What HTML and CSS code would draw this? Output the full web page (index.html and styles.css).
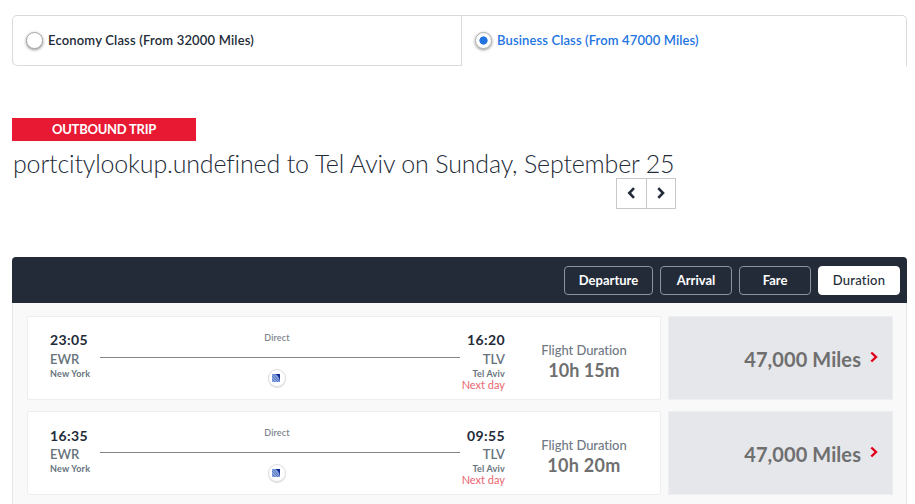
FILE: index.html
```html
<!DOCTYPE html>
<html lang="en">
<head>
	<meta charset="utf-8">
	<title>Select Flight</title>
	<link rel="stylesheet" href="styles.css">
</head>
<body>
	<div class="container">
		<div class="cabin-tabs">
			<label class="cabin-tab">
				<input type="radio" name="cabin" value="economy">
				<span class="economy-label">Economy Class (From 32000 Miles)</span>
			</label>
			<label class="cabin-tab active">
				<input type="radio" name="cabin" value="business" checked>
				<span class="business-label">Business Class (From 47000 Miles)</span>
			</label>
		</div>

		<div class="trip-badge"><span>OUTBOUND TRIP</span></div>
		<h1><span>portcitylookup.undefined to Tel Aviv on Sunday, September 25</span></h1>
		<div class="day-nav">
			<button type="button" aria-label="Previous day"><svg width="8" height="12" viewBox="0 0 8 12"><path d="M7 1.2 2.3 6 7 10.8"/></svg></button>
			<button type="button" aria-label="Next day"><svg width="8" height="12" viewBox="0 0 8 12"><path d="M1.3 1.2 6 6l-4.7 4.8"/></svg></button>
		</div>

		<div class="results">
			<div class="sort-bar">
				<button type="button" class="sort-departure">Departure</button>
				<button type="button" class="sort-arrival">Arrival</button>
				<button type="button" class="sort-fare">Fare</button>
				<button type="button" class="sort-duration selected">Duration</button>
			</div>
			<div class="flight-list">
				<div class="flight">
					<div class="flight-info">
						<div class="airport">
							<span class="time">23:05</span>
							<span class="code">EWR</span>
							<span class="city">New York</span>
						</div>
						<div class="route">
							<span class="stops">Direct</span>
							<span class="route-line"></span>
							<span class="airline"><svg width="9" height="9" viewBox="0 0 9 9"><path fill="#8ba6dc" d="M0 0h8v8H0z"/><path fill="#102e94" d="M3 0h5v8C7.500 4 6 1.500 3 0z"/><path stroke="#3f62b8" stroke-width=".7" fill="none" d="M0 2l6 6M0 5l3 3M1 0l6 7"/></svg></span>
						</div>
						<div class="airport arrival">
							<span class="time">16:20</span>
							<span class="code">TLV</span>
							<span class="city">Tel Aviv</span>
							<span class="next-day">Next day</span>
						</div>
						<div class="duration">
							<span class="duration-label">Flight Duration</span>
							<span class="duration-value">10h 15m</span>
						</div>
					</div>
					<div class="price">
						<span>47,000 Miles</span>
						<svg width="8" height="12" viewBox="0 0 8 12"><path d="M1.3 1.5 6 6l-4.7 4.5"/></svg>
					</div>
				</div>
				<div class="flight">
					<div class="flight-info">
						<div class="airport">
							<span class="time later">16:35</span>
							<span class="code">EWR</span>
							<span class="city">New York</span>
						</div>
						<div class="route">
							<span class="stops">Direct</span>
							<span class="route-line"></span>
							<span class="airline"><svg width="9" height="9" viewBox="0 0 9 9"><path fill="#8ba6dc" d="M0 0h8v8H0z"/><path fill="#102e94" d="M3 0h5v8C7.500 4 6 1.500 3 0z"/><path stroke="#3f62b8" stroke-width=".7" fill="none" d="M0 2l6 6M0 5l3 3M1 0l6 7"/></svg></span>
						</div>
						<div class="airport arrival">
							<span class="time later">09:55</span>
							<span class="code">TLV</span>
							<span class="city">Tel Aviv</span>
							<span class="next-day">Next day</span>
						</div>
						<div class="duration">
							<span class="duration-label">Flight Duration</span>
							<span class="duration-value wide">10h 20m</span>
						</div>
					</div>
					<div class="price">
						<span>47,000 Miles</span>
						<svg width="8" height="12" viewBox="0 0 8 12"><path d="M1.3 1.5 6 6l-4.7 4.5"/></svg>
					</div>
				</div>
			</div>
		</div>
	</div>
</body>
</html>
```
FILE: styles.css
```css
* {
	box-sizing: border-box;
}

body {
	margin: 0;
	background: #fff;
	color: #232b38;
	font-family: Lato, "Open Sans", sans-serif;
	overflow: hidden;
}

.container {
	width: 895px;
	margin: 15px 0 0 12px;
}

button {
	font-family: inherit;
	padding: 0;
	cursor: pointer;
}

svg {
	display: block;
}

/* cabin class */
.cabin-tabs {
	display: flex;
	height: 51px;
	border: 1px solid #d9dada;
	border-bottom: none;
	border-radius: 5px 5px 0 5px;
}

.cabin-tab {
	display: flex;
	align-items: center;
	flex: 1;
	padding-left: 13px;
	font-size: 13px;
	font-weight: 600;
	white-space: nowrap;
}

.cabin-tab:first-child {
	flex: 0 0 449px;
	border-right: 1px solid #d9dada;
	border-bottom: 1px solid #d9dada;
	border-bottom-left-radius: 5px;
}

.cabin-tab.active {
	color: #2374e1;
}

.cabin-tab input {
	appearance: none;
	width: 17px;
	height: 17px;
	margin: 0 5px 1px 0;
	border: 1px solid #aaa;
	border-radius: 50%;
	background: #fff;
	box-shadow: 0 1px 3px rgba(0, 0, 0, 0.45);
}

.cabin-tab input:checked {
	background: radial-gradient(circle, #2374e1 3.8px, #fff 4.4px);
}

.economy-label,
.business-label {
	padding-bottom: 2px;
	letter-spacing: 0.18px;
}

.business-label {
	letter-spacing: 0.12px;
}

/* trip heading */
.trip-badge {
	width: 184px;
	height: 23px;
	margin-top: 52px;
	background: #e81932;
	color: #fff;
	font-size: 13px;
	font-weight: 700;
	letter-spacing: -0.25px;
	line-height: 23px;
	text-align: center;
}

h1 {
	height: 37px;
	margin: 0;
	padding-left: 1px;
	font-size: 25px;
	font-weight: 300;
	letter-spacing: -0.17px;
	line-height: 44px;
	white-space: nowrap;
}

.day-nav {
	display: flex;
	width: 60px;
	height: 31px;
	margin-left: 604px;
	border: 1px solid #c8c8c8;
}

.day-nav button {
	display: flex;
	align-items: center;
	justify-content: center;
	flex: 1;
	border: none;
	background: #fff;
}

.day-nav button + button {
	border-left: 1px solid #c8c8c8;
}

.day-nav svg {
	margin-bottom: 1px;
}

.day-nav path {
	fill: none;
	stroke: #232b38;
	stroke-width: 2.6;
}

/* results */
.results {
	margin-top: 48px;
}

.sort-bar {
	display: flex;
	align-items: center;
	justify-content: flex-end;
	gap: 7px;
	height: 46px;
	padding-right: 7px;
	border-radius: 4px 4px 0 0;
	background: #232b38;
}

.sort-bar button {
	width: 72px;
	height: 29px;
	border: 1px solid #8e939b;
	border-radius: 4px;
	background: transparent;
	color: #fff;
	font-size: 13px;
	font-weight: 700;
}

.sort-bar .sort-departure {
	width: 89px;
}

.sort-bar .sort-duration {
	width: 82px;
	letter-spacing: 0.2px;
}

.sort-bar .selected {
	border-color: #fff;
	background: #fff;
	color: #232b38;
	font-weight: 500;
}

.flight-list {
	height: 220px;
	padding: 13px 13px 0 14px;
	border: 1px solid #e5e5e5;
	border-top: none;
	background: #f9f9f9;
}

.flight {
	display: flex;
	gap: 7px;
	height: 84px;
	margin-bottom: 11px;
}

.flight-info {
	display: flex;
	flex: 0 0 634px;
	padding-left: 22px;
	border: 1px solid #eee;
	border-radius: 2px;
	background: #fff;
}

.airport {
	display: flex;
	flex-direction: column;
	width: 50px;
	padding-top: 14px;
	color: #66727c;
	white-space: nowrap;
}

.airport.arrival {
	align-items: flex-end;
	width: 45px;
}

.time {
	height: 19px;
	color: #232b38;
	font-size: 14px;
	font-weight: 700;
	letter-spacing: 0.4px;
	line-height: 17px;
}

.time.later {
	padding-top: 1px;
}

.code {
	height: 18px;
	font-size: 13px;
	font-weight: 600;
	line-height: 19px;
}

.airport .city {
	height: 12px;
	font-size: 9px;
	font-weight: 700;
	letter-spacing: 0.2px;
	line-height: 12px;
}

.next-day {
	height: 12px;
	color: #e9656f;
	font-size: 11px;
	line-height: 10px;
}

.route {
	display: flex;
	flex-direction: column;
	align-items: center;
	width: 360px;
	padding: 14px 6px 0 0;
}

.stops {
	height: 26px;
	color: #7b838b;
	font-size: 9px;
	font-weight: 600;
	letter-spacing: 0.15px;
	line-height: 14px;
}

.route-line {
	width: 360px;
	height: 1px;
	margin-right: -6px;
	background: #858585;
}

.airline {
	display: flex;
	align-items: center;
	justify-content: center;
	width: 18px;
	height: 18px;
	margin: 11px 1px 0 0;
	border: 1px solid #ddd;
	border-radius: 50%;
	box-shadow: 0 1px 1px rgba(0, 0, 0, 0.15);
}

.duration {
	display: flex;
	flex-direction: column;
	align-items: center;
	flex: 1;
	padding: 23px 0 0 3px;
	color: #6f6f6f;
	white-space: nowrap;
}

.duration-label {
	height: 19px;
	color: #707984;
	font-size: 13px;
	font-weight: 500;
	letter-spacing: -0.05px;
	line-height: 20px;
}

.duration-value {
	font-size: 18px;
	font-weight: 700;
	line-height: 23px;
}

.duration-value.wide {
	letter-spacing: 0.3px;
}

.price {
	display: flex;
	align-items: center;
	justify-content: flex-end;
	gap: 9px;
	width: 225px;
	padding: 1px 14px 0 0;
	border: 1px solid #eceef0;
	background: #e6e7eb;
	color: #6f6f6f;
	font-size: 20px;
	font-weight: 700;
	letter-spacing: 0.08px;
	white-space: nowrap;
}

.price svg {
	margin-bottom: 3px;
}

.price path {
	fill: none;
	stroke: #e3001b;
	stroke-width: 2.4;
}
```
